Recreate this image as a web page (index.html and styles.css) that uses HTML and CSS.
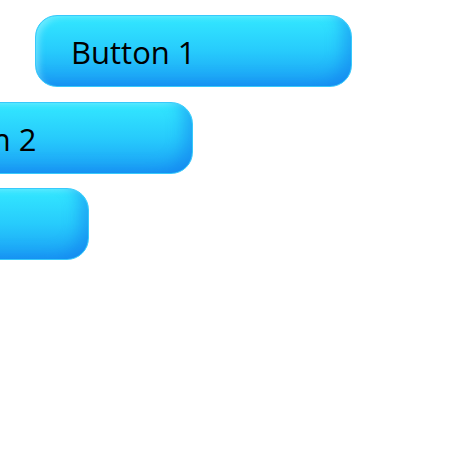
FILE: index.html
```html
<!DOCTYPE html>
<html>
<head>
<meta charset="utf-8">
<link rel="stylesheet" href="styles.css">
</head>
<body>
<div class="stack">
  <button class="btn btn-1">Button 1</button>
  <button class="btn btn-2">Button 2</button>
  <button class="btn btn-3">Button 3</button>
</div>
</body>
</html>
```

FILE: styles.css
```css
html, body {
  margin: 0;
  padding: 0;
  background: #ffffff;
  overflow: hidden;
}
.stack {
  display: flex;
  flex-direction: column;
  align-items: flex-start;
  padding-top: 15px;
}
.btn {
  box-sizing: border-box;
  flex: none;
  width: 317px;
  height: 72px;
  border-radius: 22px;
  border: 1px solid #38c9fb;
  padding: 2px 0 0 35px;
  text-align: left;
  font-family: "Open Sans", sans-serif;
  font-size: 31px;
  color: #000000;
  background: linear-gradient(to bottom, #33e8ff 0%, #27cbfc 50%, #1a9ef6 100%);
  box-shadow:
    inset -14px -8px 16px -6px rgba(16, 120, 235, 0.5),
    inset 6px 4px 6px -3px rgba(150, 238, 255, 0.6);
  line-height: 1;
}
.btn-1 { margin-left: 35px; }
.btn-2 { margin-left: -124px; margin-top: 15px; }
.btn-3 { margin-left: -228px; margin-top: 14px; }
```
